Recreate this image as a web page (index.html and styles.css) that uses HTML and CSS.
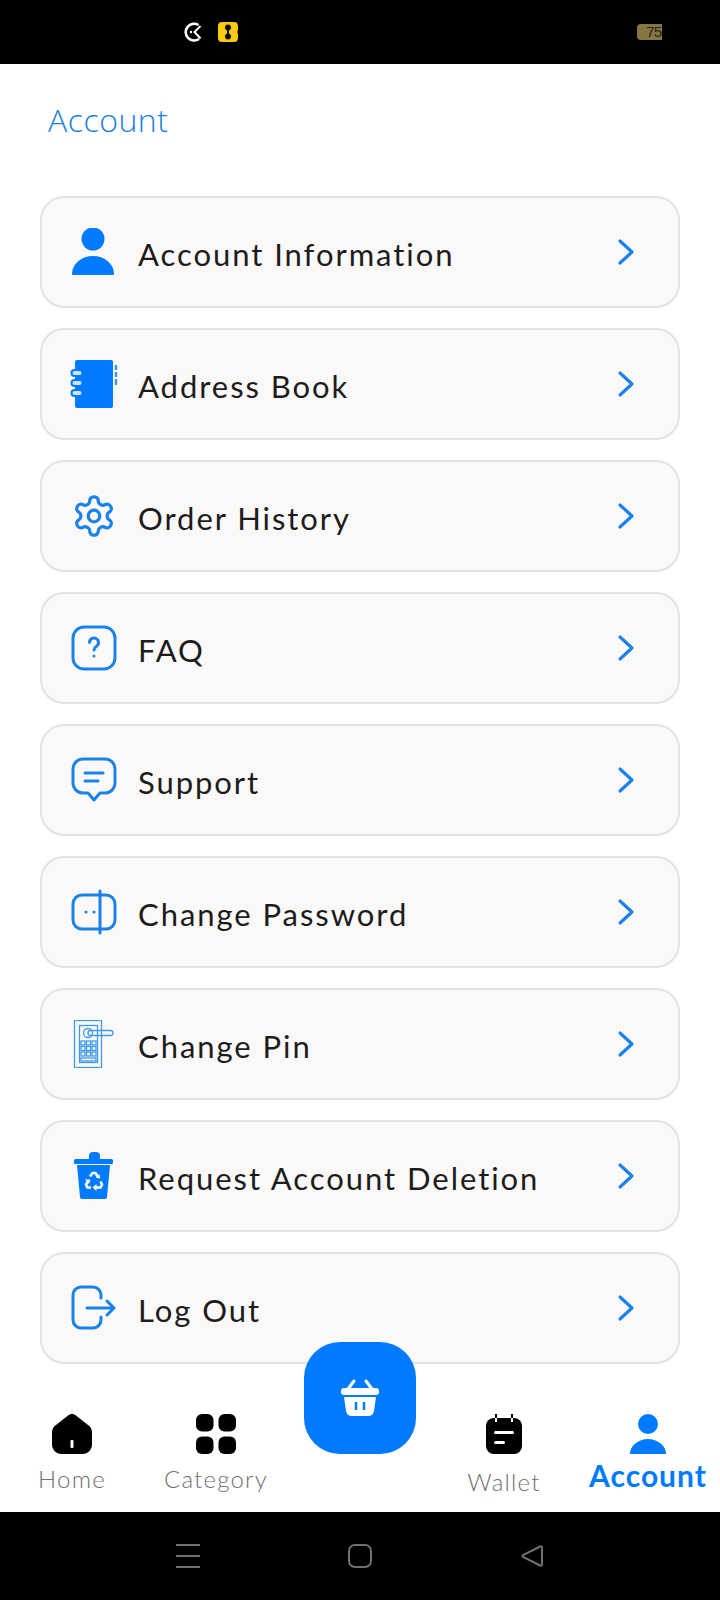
FILE: index.html
```html
<!DOCTYPE html>
<html lang="en">
<head>
  <meta charset="UTF-8" />
  <title>Account</title>
  <link rel="stylesheet" href="styles.css">
</head>
<body>
  <div class="status-bar">
    <div class="status-left">
      <svg class="status-icon" viewBox="0 0 20 20" width="20" height="20"><path d="M14.500 3A8.400 8.400 0 1 0 15 17" fill="none" stroke="#fff" stroke-width="2.600"/><path d="M16.500 4 10.500 10l6 6.500" fill="none" stroke="#fff" stroke-width="2"/><circle cx="7" cy="10" r="1.200" fill="#fff"/></svg>
      <svg class="status-icon" viewBox="0 0 20 20" width="20" height="20"><path d="M4 0h12a4 4 0 0 1 4 4v3.500q-1.500 2.500 0 5V16a4 4 0 0 1-4 4H4a4 4 0 0 1-4-4V4a4 4 0 0 1 4-4z" fill="#fdc90e"/><circle cx="10" cy="5.500" r="3" fill="#111"/><circle cx="10" cy="14.500" r="3" fill="#111"/><rect x="9" y="6" width="2" height="8" fill="#111"/></svg>
    </div>
    <div class="battery">75</div>
  </div>

  <main class="content">
    <h1 class="page-title">Account</h1>
    <div class="menu">

      <a class="menu-row">
        <svg class="row-icon" viewBox="0 0 48 48"><circle cx="23" cy="11" r="11.500" fill="#007bff"/><path d="M2 46a21 18 0 0 1 42 0q0 1-1 1H3q-1 0-1-1z" fill="#007bff"/></svg>
        <span class="row-label">Account Information</span>
        <svg class="chevron" viewBox="0 0 20 28"><path d="M4 3l12 11L4 25"/></svg>
      </a>

      <a class="menu-row">
        <svg class="row-icon" viewBox="0 0 48 48">
          <rect x="5" y="0" width="38" height="48" rx="2" fill="#007bff"/>
          <g fill="#cfe4fb" stroke="#007bff" stroke-width="2"><rect x="1.500" y="10" width="11" height="6" rx="3"/><rect x="1.500" y="20" width="11" height="6" rx="3"/><rect x="1.500" y="30" width="11" height="6" rx="3"/></g>
          <path d="M46 5v5M46 12v5M46 19v6" stroke="#3d8fe0" stroke-width="2.400" fill="none"/>
        </svg>
        <span class="row-label">Address Book</span>
        <svg class="chevron" viewBox="0 0 20 28"><path d="M4 3l12 11L4 25"/></svg>
      </a>

      <a class="menu-row">
        <svg class="row-icon gear" viewBox="-0.500 -0.500 25 25"><path d="M12.220 2h-.44a2 2 0 0 0-2 2v.18a2 2 0 0 1-1 1.730l-.43.25a2 2 0 0 1-2 0l-.15-.08a2 2 0 0 0-2.730.73l-.22.38a2 2 0 0 0 .73 2.730l.15.1a2 2 0 0 1 1 1.720v.51a2 2 0 0 1-1 1.740l-.15.09a2 2 0 0 0-.73 2.730l.22.38a2 2 0 0 0 2.730.73l.15-.08a2 2 0 0 1 2 0l.43.25a2 2 0 0 1 1 1.730V20a2 2 0 0 0 2 2h.44a2 2 0 0 0 2-2v-.18a2 2 0 0 1 1-1.730l.43-.25a2 2 0 0 1 2 0l.15.08a2 2 0 0 0 2.730-.73l.22-.39a2 2 0 0 0-.73-2.730l-.15-.08a2 2 0 0 1-1-1.740v-.5a2 2 0 0 1 1-1.740l.15-.09a2 2 0 0 0 .73-2.730l-.22-.38a2 2 0 0 0-2.730-.73l-.15.08a2 2 0 0 1-2 0l-.43-.25a2 2 0 0 1-1-1.730V4a2 2 0 0 0-2-2z"/><circle cx="12" cy="12" r="3"/></svg>
        <span class="row-label">Order History</span>
        <svg class="chevron" viewBox="0 0 20 28"><path d="M4 3l12 11L4 25"/></svg>
      </a>

      <a class="menu-row">
        <svg class="row-icon line" viewBox="0 0 48 48"><rect x="3" y="3" width="42" height="42" rx="11"/><path d="M19.500 18.500a4.500 4.500 0 1 1 7 3.700c-1.600 1-2.500 2-2.500 3.800"/><path d="M24 32h.01"/></svg>
        <span class="row-label">FAQ</span>
        <svg class="chevron" viewBox="0 0 20 28"><path d="M4 3l12 11L4 25"/></svg>
      </a>

      <a class="menu-row">
        <svg class="row-icon line" viewBox="0 0 48 48"><path d="M13 3h22a10 10 0 0 1 10 10v14a10 10 0 0 1-10 10h-5l-6 7-6-7h-5A10 10 0 0 1 3 27V13A10 10 0 0 1 13 3z"/><path d="M15 17h18M15 25h13"/></svg>
        <span class="row-label">Support</span>
        <svg class="chevron" viewBox="0 0 20 28"><path d="M4 3l12 11L4 25"/></svg>
      </a>

      <a class="menu-row">
        <svg class="row-icon line" viewBox="0 0 48 48"><path d="M30 7H12a9 9 0 0 0-9 9v16a9 9 0 0 0 9 9h18"/><path d="M30 7h6a9 9 0 0 1 9 9v16a9 9 0 0 1-9 9h-6"/><path d="M30 3v42"/><path d="M16 24h.01M24 24h.01"/></svg>
        <span class="row-label">Change Password</span>
        <svg class="chevron" viewBox="0 0 20 28"><path d="M4 3l12 11L4 25"/></svg>
      </a>

      <a class="menu-row">
        <svg class="row-icon thin" viewBox="0 0 48 48">
          <rect x="4.500" y=".5" width="27" height="47"/>
          <rect x="9.500" y="5.500" width="18" height="37"/>
          <circle cx="18" cy="13" r="4.500"/>
          <rect x="18" y="10.500" width="25" height="5" rx="2.500"/>
          <g><rect x="11" y="21" width="4" height="4"/><rect x="16.500" y="21" width="4" height="4"/><rect x="22" y="21" width="4" height="4"/><rect x="11" y="26.500" width="4" height="4"/><rect x="16.500" y="26.500" width="4" height="4"/><rect x="22" y="26.500" width="4" height="4"/><rect x="11" y="32" width="4" height="4"/><rect x="16.500" y="32" width="4" height="4"/><rect x="22" y="32" width="4" height="4"/></g>
          <rect x="11" y="38" width="15" height="3"/>
        </svg>
        <span class="row-label">Change Pin</span>
        <svg class="chevron" viewBox="0 0 20 28"><path d="M4 3l12 11L4 25"/></svg>
      </a>

      <a class="menu-row">
        <svg class="row-icon" viewBox="0 0 48 48">
          <path d="M19 7V4a4 4 0 0 1 4-4h3a4 4 0 0 1 4 4v3z" fill="#007bff"/>
          <rect x="4" y="7" width="39" height="5" rx="1.500" fill="#007bff"/>
          <path d="M7 13h33l-3 32a2 2 0 0 1-2 2H12a2 2 0 0 1-2-2z" fill="#007bff"/>
          <g fill="none" stroke="#fff" stroke-width="2.600">
            <path d="M20 24.500l2.500-3.500h3l2 3.200"/>
            <path d="M30.500 29.500l1.500 3-1.500 3H26"/>
            <path d="M21 35.500h-3.500l-1.500-3 2-3.300"/>
          </g>
          <path d="M29.500 22l.6 4.500-4.300-.8zM26.500 32l0 7-4-3.500zM15 27.500l5.500 0-1.500 4.500z" fill="#fff"/>
        </svg>
        <span class="row-label">Request Account Deletion</span>
        <svg class="chevron" viewBox="0 0 20 28"><path d="M4 3l12 11L4 25"/></svg>
      </a>

      <a class="menu-row">
        <svg class="row-icon line" viewBox="0 0 48 48"><path d="M31 14v-3a8 8 0 0 0-8-8H11a8 8 0 0 0-8 8v25a8 8 0 0 0 8 8h12a8 8 0 0 0 8-8v-3"/><path d="M17 24h27M37 17l7 7-7 7"/></svg>
        <span class="row-label">Log Out</span>
        <svg class="chevron" viewBox="0 0 20 28"><path d="M4 3l12 11L4 25"/></svg>
      </a>

    </div>
  </main>

  <nav class="tab-bar">
    <a class="tab">
      <svg class="tab-icon" viewBox="0 0 40 40"><path d="M16 1.500a6 6 0 0 1 8 0l12 9.500a9 9 0 0 1 4 7V31a9 9 0 0 1-9 9H9a9 9 0 0 1-9-9V18a9 9 0 0 1 4-7z"/><rect x="18.500" y="26" width="3" height="8" rx="1" fill="#fff"/></svg>
      <span class="tab-label">Home</span>
    </a>
    <a class="tab">
      <svg class="tab-icon" viewBox="0 0 40 40"><rect width="17.500" height="17.500" rx="6"/><rect x="22.500" width="17.500" height="17.500" rx="6"/><rect y="22.500" width="17.500" height="17.500" rx="6"/><rect x="22.500" y="22.500" width="17.500" height="17.500" rx="6"/></svg>
      <span class="tab-label">Category</span>
    </a>
    <div class="tab-center">
      <a class="cart-btn">
        <svg viewBox="0 0 40 40" width="40" height="40" fill="#fff"><path d="M1 13a3 3 0 0 1 3-3h32a3 3 0 0 1 3 3v1a3 3 0 0 1-3 3H4a3 3 0 0 1-3-3z"/><path d="M4 19h32l-2 14a6 6 0 0 1-6 5H12a6 6 0 0 1-6-5z"/><path d="M16 24v8M24 24v8" stroke="#007bff" stroke-width="2.400"/><path d="M8 11l6-8M32 11l-6-8" stroke="#fff" stroke-width="3" stroke-linecap="round"/></svg>
      </a>
    </div>
    <a class="tab">
      <svg class="tab-icon" viewBox="0 0 40 40"><path d="M10 4h20a8 8 0 0 1 8 8v20a8 8 0 0 1-8 8H10a8 8 0 0 1-8-8V12a8 8 0 0 1 8-8z"/><path d="M12 0v4M28 0v4" stroke="#000" stroke-width="2"/><path d="M12 4v4M28 4v4" stroke="#fff" stroke-width="2"/><rect x="10" y="17" width="20" height="3" rx="1.500" fill="#fff"/><rect x="10" y="27" width="11" height="3" rx="1.500" fill="#fff"/></svg>
      <span class="tab-label wallet">Wallet</span>
    </a>
    <a class="tab active">
      <svg class="tab-icon" viewBox="0 0 40 40"><circle cx="20" cy="10" r="10"/><path d="M2 40a18 15 0 0 1 36 0z"/></svg>
      <span class="tab-label">Account</span>
    </a>
  </nav>

  <div class="nav-bar">
    <svg viewBox="0 0 24 24"><path d="M0 1h24M0 12h24M0 23h24"/></svg>
    <svg viewBox="0 0 24 24"><rect x="1" y="1" width="22" height="22" rx="6"/></svg>
    <svg viewBox="0 0 24 24"><path d="M22 3.500v17a1.200 1.200 0 0 1-1.800 1L3 13a1.200 1.200 0 0 1 0-2l17.200-8.500a1.200 1.200 0 0 1 1.800 1z"/></svg>
  </div>
</body>
</html>
```

FILE: styles.css
```css
* {
  box-sizing: border-box;
}

html, body {
  margin: 0;
  height: 100%;
}

body {
  display: flex;
  flex-direction: column;
  width: 720px;
  height: 1600px;
  background: #fff;
  font-family: Lato, "Noto Sans", sans-serif;
  overflow: hidden;
}

/* status bar */
.status-bar {
  height: 64px;
  background: #000;
  display: flex;
  align-items: center;
  padding: 0 58px 0 184px;
  justify-content: space-between;
}

.status-left {
  display: flex;
  gap: 14px;
}

.status-icon {
  display: block;
}

.battery {
  width: 25px;
  height: 16px;
  background: #857644;
  border-radius: 4px 0 0 4px;
  color: #2b2818;
  font-family: "Liberation Sans", sans-serif;
  font-size: 15px;
  line-height: 16px;
  letter-spacing: -1px;
  text-align: right;
  padding-right: 1px;
}

/* main part */
.content {
  flex: 1;
  padding: 0 40px;
}

.page-title {
  margin: 0;
  height: 132px;
  padding: 35px 0 0 8px;
  font-family: "Open Sans", sans-serif;
  font-size: 32px;
  line-height: 42px;
  letter-spacing: 0.5px;
  font-weight: 300;
  color: #1b7fdc;
}

.menu {
  display: flex;
  flex-direction: column;
  gap: 20px;
}

.menu-row {
  height: 112px;
  display: flex;
  align-items: center;
  padding: 0 42px 0 28px;
  background: #fbf9f8;
  border: 2px solid #e2e2e2;
  border-radius: 24px;
}

.row-icon {
  width: 48px;
  height: 48px;
  flex: none;
}

.row-icon.line, .row-icon.gear {
  fill: none;
  stroke: #1a82e8;
  stroke-width: 3;
  stroke-linecap: round;
  stroke-linejoin: round;
}

.row-icon.gear {
  stroke-width: 1.700;
}

.row-icon.thin {
  fill: none;
  stroke: #3f9bec;
  stroke-width: 1.300;
}

.row-label {
  flex: 1;
  margin-left: 20px;
  padding-top: 3px;
  font-size: 31px;
  letter-spacing: 1.950px;
  color: #1c1c1c;
}

.chevron {
  width: 20px;
  height: 28px;
  flex: none;
  fill: none;
  stroke: #1a82e8;
  stroke-width: 3.200;
  stroke-linecap: round;
  stroke-linejoin: round;
}

/* tabs */
.tab-bar {
  height: 148px;
  display: grid;
  grid-template-columns: repeat(5, 144px);
  padding-top: 50px;
}

.tab {
  display: flex;
  flex-direction: column;
  align-items: center;
}

.tab-icon {
  width: 40px;
  height: 40px;
  fill: #000;
}

.tab-label {
  margin-top: 10px;
  font-size: 24px;
  font-weight: 300;
  letter-spacing: 1.200px;
  color: #707070;
  white-space: nowrap;
}

.tab-label.wallet {
  margin-top: 13px;
}

.tab.active .tab-icon {
  fill: #007bff;
}

.tab.active .tab-label {
  margin-top: 3px;
  font-size: 30px;
  font-weight: 700;
  letter-spacing: 1px;
  color: #007bff;
}

.tab-center {
  display: flex;
  justify-content: center;
}

.cart-btn {
  width: 112px;
  height: 112px;
  margin-top: -72px;
  display: flex;
  align-items: center;
  justify-content: center;
  background: #007bff;
  border-radius: 36px;
}

/* android nav */
.nav-bar {
  height: 88px;
  background: #000;
  display: flex;
  justify-content: center;
  gap: 148px;
  padding-top: 32px;
}

.nav-bar svg {
  width: 24px;
  height: 24px;
  fill: none;
  stroke: #6f6f6f;
  stroke-width: 2;
}
```
